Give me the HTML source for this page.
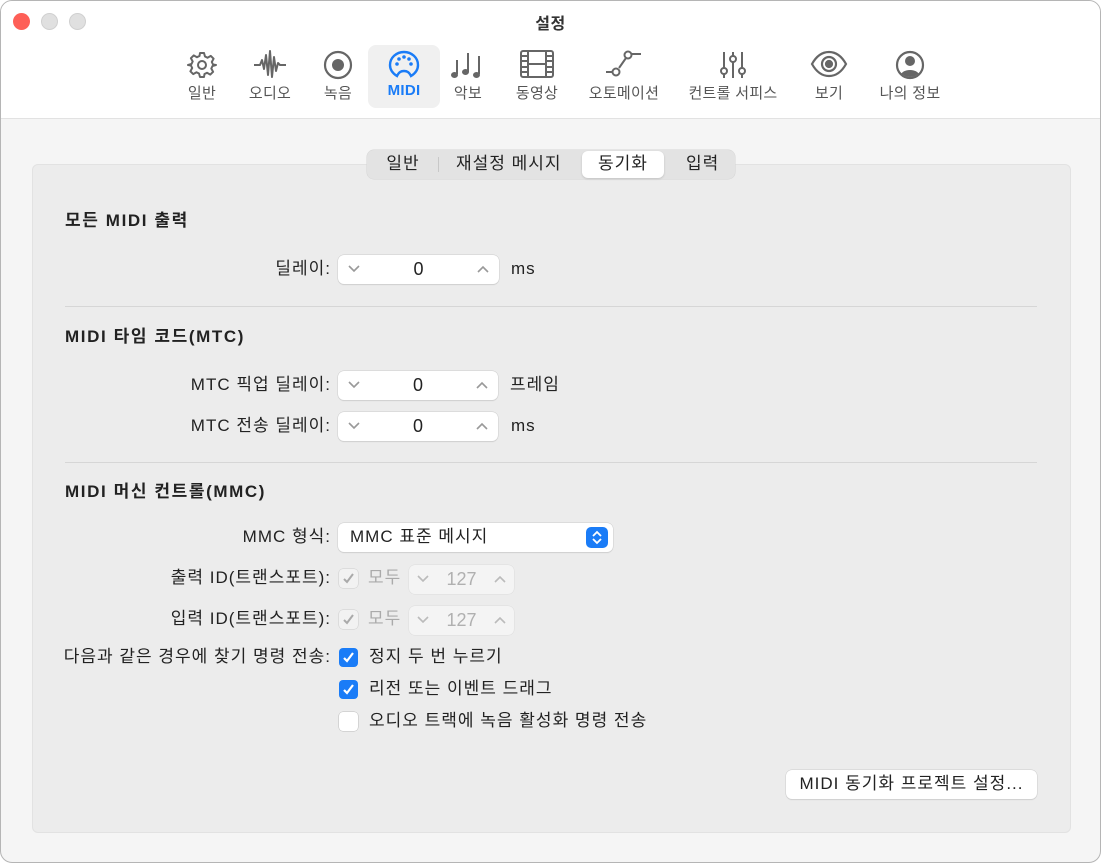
<!DOCTYPE html>
<html><head><meta charset="utf-8">
<style>
*{box-sizing:border-box;margin:0;padding:0}
body{width:1101px;height:865px;background:#fff;font-family:"Liberation Sans","Noto Sans CJK KR",sans-serif;color:#222;position:relative;overflow:hidden}
.win{position:absolute;left:0;top:0;width:1101px;height:863px;border:1px solid #b5b5b5;border-radius:12px;background:#f5f5f5;overflow:hidden}
.tb{position:absolute;left:0;top:0;right:0;height:118px;background:#fff;border-bottom:1px solid #e2e2e2}
.dot{position:absolute;top:12px;width:17px;height:17px;border-radius:50%}
.title{position:absolute;top:9px;left:0;right:0;text-align:center;font-size:16px;font-weight:bold;color:#333;letter-spacing:.5px}
.ti{position:absolute;top:44px;height:63px;text-align:center;font-size:15px;color:#555;letter-spacing:.3px}
.ti svg{position:absolute;left:50%;top:5px;transform:translateX(-50%)}
.ti span{position:absolute;left:-20px;right:-20px;top:37px;white-space:nowrap}
.box{position:absolute;left:31px;top:163px;width:1039px;height:669px;background:#ececec;border:1px solid #e2e2e2;border-radius:6px}
.a{position:absolute;white-space:nowrap;font-size:17px;line-height:20px;letter-spacing:1px}
.r{text-align:right}
.h{font-weight:bold;letter-spacing:1.6px}
.st{position:absolute;background:#fff;border-radius:6px;box-shadow:0 0 0 .5px #ccc,0 1px 1px rgba(0,0,0,.12);font-size:18px;text-align:center;line-height:28px}
.st.dis{background:#f4f4f4;color:#b0b0b0;box-shadow:0 0 0 .5px #ddd}
.st svg{position:absolute;top:10px}
.div{position:absolute;left:64px;width:972px;height:1px;background:#d6d6d6}
.cb{position:absolute;width:19px;height:19px;border-radius:4px}
.cb.on{background:#1a7cf7}
.cb.off{background:#fff;box-shadow:0 0 0 .5px #bbb}
.cb.dis{background:#f2f2f2;box-shadow:0 0 0 .5px #ccc}
.cb svg{position:absolute;left:3px;top:3px}
</style></head><body>
<div class="win">
<div class="tb">
<div class="dot" style="left:12px;background:#fe5f57"></div>
<div class="dot" style="left:40px;background:#e0e0e0;border:1px solid #d0d0d0"></div>
<div class="dot" style="left:68px;background:#e0e0e0;border:1px solid #d0d0d0"></div>
<div class="title">설정</div>

<div class="ti" style="left:171px;width:60px"><svg width="30" height="30" viewBox="0 0 30 30" fill="none" stroke="#666" stroke-width="2"><path d="M13 3h4l1 3.5 2.5 1.2 3.3-1.8 2.8 2.8-1.8 3.3 1.2 2.5L29 15v0l-3.5 1 -1.2 2.5 1.8 3.3-2.8 2.8-3.3-1.8-2.5 1.2L17 27h-4l-1-3.5-2.5-1.2-3.3 1.8-2.8-2.8 1.8-3.3L4 15.5 1 15v0l3.5-1 1.2-2.5L3.9 8.2l2.8-2.8 3.3 1.8L12.5 6z" stroke-linejoin="round"/><circle cx="15" cy="15" r="4"/></svg><span>일반</span></div>
<div class="ti" style="left:239px;width:60px"><svg width="36" height="30" viewBox="0 0 36 30" fill="none" stroke="#666" stroke-width="2" stroke-linejoin="round"><path d="M2 15h6l2-5 2 9 2-14 2 20 2-24 2 26 2-20 2 14 2-8 2 2h6"/></svg><span>오디오</span></div>
<div class="ti" style="left:307px;width:60px"><svg width="30" height="30" viewBox="0 0 30 30"><circle cx="15" cy="15" r="13" fill="none" stroke="#666" stroke-width="2.2"/><circle cx="15" cy="15" r="6" fill="#666"/></svg><span>녹음</span></div>
<div class="ti" style="left:367px;width:72px;background:#f0f0f0;border-radius:8px;color:#1a7cf7;font-weight:bold"><svg width="32" height="30" viewBox="0 0 32 30" fill="none" stroke="#1a7cf7" stroke-width="2.4"><path d="M9 26C4 23 2 19 2 15A14 13 0 0 1 30 15c0 4-2 8-7 11-2-4-4-5-7-5s-5 1-7 5z"/><g fill="#1a7cf7" stroke="none"><circle cx="9" cy="14" r="1.8"/><circle cx="11" cy="9" r="1.8"/><circle cx="16" cy="7" r="1.8"/><circle cx="21" cy="9" r="1.8"/><circle cx="23" cy="14" r="1.8"/></g></svg><span>MIDI</span></div>
<div class="ti" style="left:437px;width:60px"><svg width="36" height="30" viewBox="0 0 36 30" fill="#666" stroke="#666" stroke-width="2"><path d="M7 24V10M18 22V3M29 24V6" fill="none"/><ellipse cx="4.5" cy="25" rx="3.5" ry="3" stroke="none"/><ellipse cx="15.5" cy="22" rx="3.5" ry="3" stroke="none"/><ellipse cx="26.5" cy="25" rx="3.5" ry="3" stroke="none"/></svg><span>악보</span></div>
<div class="ti" style="left:501px;width:70px"><svg width="34" height="28" viewBox="0 0 34 28" fill="none" stroke="#666" stroke-width="2"><rect x="1" y="1" width="32" height="26" rx="2"/><path d="M8 1v26M26 1v26M8 14h18M1 6h7M1 11h7M1 17h7M1 22h7M26 6h7M26 11h7M26 17h7M26 22h7"/></svg><span>동영상</span></div>
<div class="ti" style="left:583px;width:80px"><svg width="40" height="28" viewBox="0 0 40 28" fill="none" stroke="#666" stroke-width="2"><path d="M2 22h6M15 18l7-10M27 4h10"/><circle cx="12" cy="22" r="3.5"/><circle cx="24" cy="5" r="3.5"/></svg><span>오토메이션</span></div>
<div class="ti" style="left:682px;width:100px"><svg width="30" height="30" viewBox="0 0 30 30" fill="none" stroke="#666" stroke-width="2"><path d="M6 2v16M6 24v4M15 2v4M15 12v16M24 2v16M24 24v4"/><circle cx="6" cy="21" r="3"/><circle cx="15" cy="9" r="3"/><circle cx="24" cy="21" r="3"/></svg><span>컨트롤 서피스</span></div>
<div class="ti" style="left:798px;width:60px"><svg width="38" height="28" viewBox="0 0 38 28" fill="none" stroke="#666" stroke-width="2.2"><path d="M2 14C7 5 13 2 19 2s12 3 17 12c-5 9-11 12-17 12S7 23 2 14z"/><circle cx="19" cy="14" r="7"/><circle cx="19" cy="14" r="3" fill="#666"/></svg><span>보기</span></div>
<div class="ti" style="left:874px;width:70px"><svg width="30" height="30" viewBox="0 0 30 30"><defs><clipPath id="c"><circle cx="15" cy="15" r="12"/></clipPath></defs><circle cx="15" cy="15" r="13" fill="none" stroke="#666" stroke-width="2.2"/><circle cx="15" cy="11" r="5" fill="#666"/><ellipse cx="15" cy="27" rx="10" ry="7" fill="#666" clip-path="url(#c)"/></svg><span>나의 정보</span></div>
</div>

<div class="box"></div>
<div style="position:absolute;left:366px;top:149px;width:368px;height:29px;background:#e3e3e3;border-radius:7px;box-shadow:0 0 0 .5px #d5d5d5"></div>
<div style="position:absolute;left:581px;top:150px;width:82px;height:27px;background:#fff;border-radius:6px;box-shadow:0 1px 2px rgba(0,0,0,.15)"></div>
<div style="position:absolute;left:437px;top:156px;width:1px;height:15px;background:#c8c8c8"></div>
<div class="a" style="left:371px;top:153px;width:62px;text-align:center">일반</div>
<div class="a" style="left:455px;top:153px">재설정 메시지</div>
<div class="a" style="left:581px;top:153px;width:82px;text-align:center">동기화</div>
<div class="a" style="left:685px;top:153px">입력</div>

<div class="a h" style="left:64px;top:210px">모든 MIDI 출력</div>
<div class="a r" style="right:769px;top:258px">딜레이:</div>
<div class="st" style="left:337px;top:254px;width:161px;height:29px"><svg style="left:10px" width="12" height="8" viewBox="0 0 12 8"><path d="M1 1l5 5 5-5" fill="none" stroke="#999" stroke-width="1.6"/></svg>0<svg style="right:10px" width="12" height="8" viewBox="0 0 12 8"><path d="M1 7l5-5 5 5" fill="none" stroke="#999" stroke-width="1.6"/></svg></div>
<div class="a" style="left:510px;top:258px">ms</div>
<div class="div" style="top:305px"></div>

<div class="a h" style="left:64px;top:326px">MIDI 타임 코드(MTC)</div>
<div class="a r" style="right:769px;top:374px">MTC 픽업 딜레이:</div>
<div class="st" style="left:337px;top:370px;width:160px;height:29px"><svg style="left:10px" width="12" height="8" viewBox="0 0 12 8"><path d="M1 1l5 5 5-5" fill="none" stroke="#999" stroke-width="1.6"/></svg>0<svg style="right:10px" width="12" height="8" viewBox="0 0 12 8"><path d="M1 7l5-5 5 5" fill="none" stroke="#999" stroke-width="1.6"/></svg></div>
<div class="a" style="left:509px;top:374px">프레임</div>
<div class="a r" style="right:769px;top:415px">MTC 전송 딜레이:</div>
<div class="st" style="left:337px;top:411px;width:160px;height:29px"><svg style="left:10px" width="12" height="8" viewBox="0 0 12 8"><path d="M1 1l5 5 5-5" fill="none" stroke="#999" stroke-width="1.6"/></svg>0<svg style="right:10px" width="12" height="8" viewBox="0 0 12 8"><path d="M1 7l5-5 5 5" fill="none" stroke="#999" stroke-width="1.6"/></svg></div>
<div class="a" style="left:510px;top:415px">ms</div>
<div class="div" style="top:461px"></div>

<div class="a h" style="left:64px;top:481px">MIDI 머신 컨트롤(MMC)</div>
<div class="a r" style="right:769px;top:526px">MMC 형식:</div>
<div class="st" style="left:337px;top:522px;width:275px;height:29px;text-align:left;padding-left:12px;color:#222;font-size:17px;letter-spacing:1px">MMC 표준 메시지<div style="position:absolute;left:248px;top:4px;width:22px;height:21px;background:#1a7cf7;border-radius:5px"><svg style="position:absolute;left:5px;top:3px" width="12" height="15" viewBox="0 0 12 15" fill="none" stroke="#fff" stroke-width="1.8"><path d="M2 6l4-4 4 4M2 9l4 4 4-4"/></svg></div></div>

<div class="a r" style="right:769px;top:567px">출력 ID(트랜스포트):</div>
<div class="cb dis" style="left:338px;top:568px"><svg width="13" height="13" viewBox="0 0 13 13"><path d="M2 7l3 3 6-8" fill="none" stroke="#aaa" stroke-width="2"/></svg></div>
<div class="a" style="left:367px;top:567px;color:#aaa">모두</div>
<div class="st dis" style="left:408px;top:564px;width:105px;height:29px"><svg style="left:8px" width="12" height="8" viewBox="0 0 12 8"><path d="M1 1l5 5 5-5" fill="none" stroke="#bbb" stroke-width="1.6"/></svg>127<svg style="right:8px" width="12" height="8" viewBox="0 0 12 8"><path d="M1 7l5-5 5 5" fill="none" stroke="#bbb" stroke-width="1.6"/></svg></div>
<div class="a r" style="right:769px;top:608px">입력 ID(트랜스포트):</div>
<div class="cb dis" style="left:338px;top:609px"><svg width="13" height="13" viewBox="0 0 13 13"><path d="M2 7l3 3 6-8" fill="none" stroke="#aaa" stroke-width="2"/></svg></div>
<div class="a" style="left:367px;top:608px;color:#aaa">모두</div>
<div class="st dis" style="left:408px;top:605px;width:105px;height:29px"><svg style="left:8px" width="12" height="8" viewBox="0 0 12 8"><path d="M1 1l5 5 5-5" fill="none" stroke="#bbb" stroke-width="1.6"/></svg>127<svg style="right:8px" width="12" height="8" viewBox="0 0 12 8"><path d="M1 7l5-5 5 5" fill="none" stroke="#bbb" stroke-width="1.6"/></svg></div>

<div class="a r" style="right:769px;top:646px">다음과 같은 경우에 찾기 명령 전송:</div>
<div class="cb on" style="left:338px;top:647px"><svg width="13" height="13" viewBox="0 0 13 13"><path d="M2 7l3 3 6-8" fill="none" stroke="#fff" stroke-width="2.2"/></svg></div>
<div class="a" style="left:368px;top:646px">정지 두 번 누르기</div>
<div class="cb on" style="left:338px;top:679px"><svg width="13" height="13" viewBox="0 0 13 13"><path d="M2 7l3 3 6-8" fill="none" stroke="#fff" stroke-width="2.2"/></svg></div>
<div class="a" style="left:368px;top:678px">리전 또는 이벤트 드래그</div>
<div class="cb off" style="left:338px;top:711px"></div>
<div class="a" style="left:368px;top:710px">오디오 트랙에 녹음 활성화 명령 전송</div>

<div class="st" style="left:785px;top:769px;width:251px;height:29px;color:#222;font-size:17px;letter-spacing:1px">MIDI 동기화 프로젝트 설정...</div>
</div>
</body></html>
